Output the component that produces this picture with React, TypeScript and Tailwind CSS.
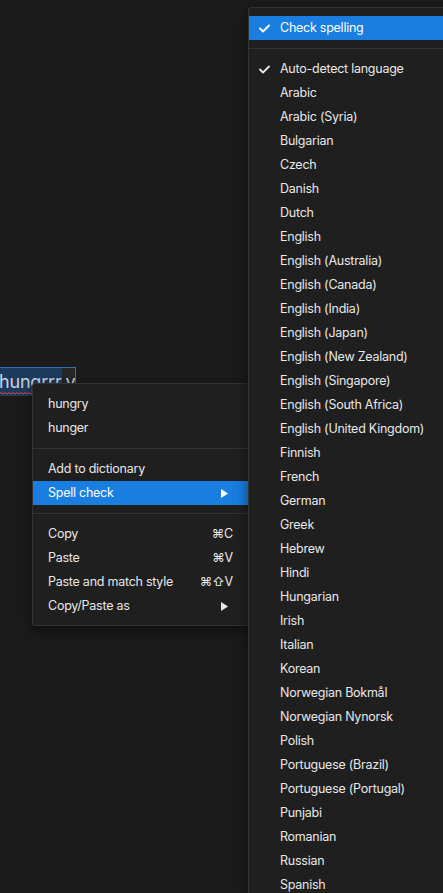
import React from "react";

const langs = [
  "Arabic",
  "Arabic (Syria)",
  "Bulgarian",
  "Czech",
  "Danish",
  "Dutch",
  "English",
  "English (Australia)",
  "English (Canada)",
  "English (India)",
  "English (Japan)",
  "English (New Zealand)",
  "English (Singapore)",
  "English (South Africa)",
  "English (United Kingdom)",
  "Finnish",
  "French",
  "German",
  "Greek",
  "Hebrew",
  "Hindi",
  "Hungarian",
  "Irish",
  "Italian",
  "Korean",
  "Norwegian Bokmål",
  "Norwegian Nynorsk",
  "Polish",
  "Portuguese (Brazil)",
  "Portuguese (Portugal)",
  "Punjabi",
  "Romanian",
  "Russian",
  "Spanish",
];

function Check() {
  return (
    <svg width="11" height="9" viewBox="0 0 11 9" className="shrink-0">
      <polyline points="1,4.5 4,7.5 10,1.5" fill="none" stroke="currentColor" strokeWidth="1.8" strokeLinecap="round" strokeLinejoin="round" />
    </svg>
  );
}

function Arrow() {
  return (
    <svg width="7" height="9" viewBox="0 0 7 9" className="mr-[5px]">
      <polygon points="0,0 7,4.5 0,9" fill="currentColor" />
    </svg>
  );
}

function Sep() {
  return <div className="my-2 h-px bg-[#333333]" />;
}

function Item({ label, right, active }: { label: string; right?: React.ReactNode; active?: boolean }) {
  return (
    <div
      className={`flex h-6 items-center justify-between pl-[15px] pr-[15px] ${
        active ? "bg-[#1a7ee0] text-white" : "text-[#e8e8e8]"
      }`}
    >
      <span>{label}</span>
      {right && <span className="flex items-center">{right}</span>}
    </div>
  );
}

function SubItem({ label, checked, active }: { label: string; checked?: boolean; active?: boolean }) {
  return (
    <div className={`flex h-6 items-center ${active ? "bg-[#1a7ee0] text-white" : "text-[#e8e8e8]"}`}>
      <span className="flex w-[31px] justify-end pr-[10px]">{checked && <Check />}</span>
      <span>{label}</span>
    </div>
  );
}

export default function App() {
  return (
    <div
      className="relative h-[893px] w-[443px] overflow-hidden bg-[#1b1b1b]"
      style={{ fontFamily: "Inter, 'Noto Sans', 'DejaVu Sans', sans-serif" }}
    >
      {/* text field */}
      <div className="pt-[367px]">
        <div className="ml-[-6px] flex h-[29px] w-[82px] items-center border border-[#2f6fb0] bg-[#1d2a38] text-[18px] leading-none tracking-[-0.2px] text-[#c7d4e2]">
          <span className="relative bg-[#1c3b5c] pl-[4px] pr-[1px] py-[5px]">
            hungrrr
            <svg className="absolute bottom-[1px] left-0" width="62" height="3" viewBox="0 0 62 3">
              <polyline
                points="0,2 2,0.5 4,2 6,0.5 8,2 10,0.5 12,2 14,0.5 16,2 18,0.5 20,2 22,0.5 24,2 26,0.5 28,2 30,0.5 32,2 34,0.5 36,2 38,0.5 40,2 42,0.5 44,2 46,0.5 48,2 50,0.5 52,2 54,0.5 56,2 58,0.5 60,2 62,0.5"
                fill="none"
                stroke="#e0453a"
                strokeWidth="1"
              />
            </svg>
          </span>
          <span className="flex-1 self-stretch bg-[#262626] pl-[3px] pt-[5px]">y</span>
        </div>
      </div>

      {/* context menu */}
      <div className="absolute left-[32px] top-[383px] z-10 w-[217px] rounded-[3px] border border-[#333333] bg-[#1f1f1f] pb-[7px] pt-[8px] text-[12.5px] tracking-[-0.25px] shadow-[0_4px_14px_rgba(0,0,0,0.5)]">
        <Item label="hungry" />
        <Item label="hunger" />
        <Sep />
        <Item label="Add to dictionary" />
        <Item label="Spell check" active right={<Arrow />} />
        <Sep />
        <Item label="Copy" right={<span>⌘C</span>} />
        <Item label="Paste" right={<span>⌘V</span>} />
        <Item label="Paste and match style" right={<span>⌘⇧V</span>} />
        <Item label="Copy/Paste as" right={<Arrow />} />
      </div>

      {/* submenu */}
      <div className="absolute left-[248px] top-[7px] z-20 w-[230px] rounded-[3px] border border-[#333333] bg-[#1f1f1f] pt-[8px] text-[12.5px] tracking-[-0.25px] shadow-[0_4px_14px_rgba(0,0,0,0.5)]">
        <SubItem label="Check spelling" checked active />
        <Sep />
        <SubItem label="Auto-detect language" checked />
        {langs.map((l) => (
          <SubItem key={l} label={l} />
        ))}
      </div>
    </div>
  );
}
